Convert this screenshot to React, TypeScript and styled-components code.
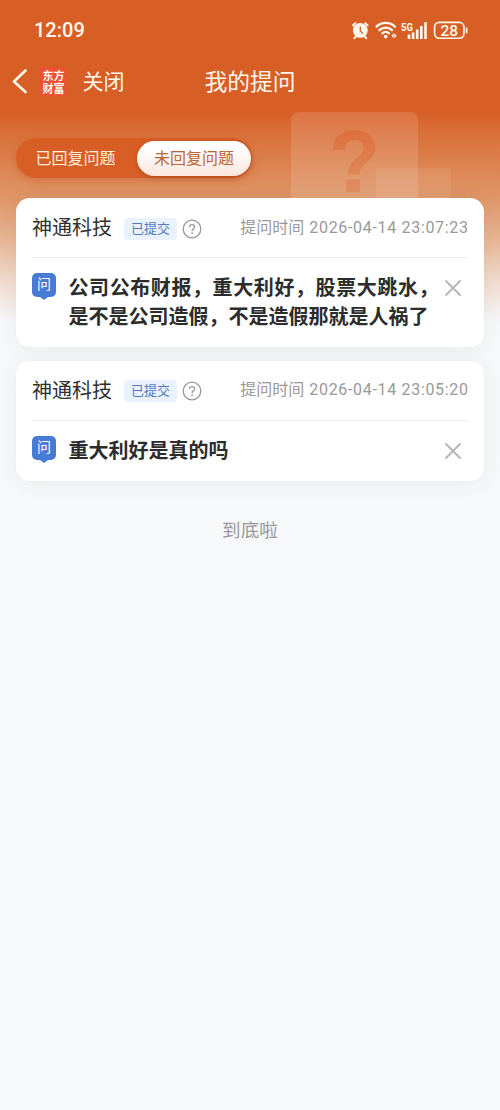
import React from "react";
import styled, { createGlobalStyle } from "styled-components";

const GlobalStyle = createGlobalStyle`
  * { box-sizing: border-box; }
  body {
    margin: 0;
    background: #f7f8fa;
    font-family: Roboto, "Noto Sans CJK SC", sans-serif;
    -webkit-font-smoothing: antialiased;
  }
`;

const Page = styled.div`
  position: relative;
  width: 500px;
  min-height: 1110px;
  overflow: hidden;
  background: linear-gradient(
      180deg,
      #d75f26 0,
      #d75f26 110px,
      #da743e 140px,
      #df9667 198px,
      #e7b696 240px,
      #f1dbce 280px,
      #f7f8fa 322px
    )
    #f7f8fa;
`;

const StatusBar = styled.div`
  display: flex;
  align-items: center;
  justify-content: space-between;
  height: 60px;
  padding: 0 32px 0 34px;
  color: #fff8ec;
`;

const Clock = styled.span`
  font-size: 20px;
  font-weight: 500;
  line-height: 24px;
`;

const StatusIcons = styled.svg`
  display: block;
  width: 118px;
  height: 24px;
`;

const NavBar = styled.div`
  position: relative;
  display: flex;
  align-items: center;
  height: 44px;
  padding-left: 12px;
  color: #fff8ec;
`;

const BackIcon = styled.svg`
  width: 16px;
  height: 26px;
`;

const Brand = styled.div`
  width: 27px;
  height: 29px;
  margin: -2px 15.5px 0 12px;
  padding-top: 2px;
  border-radius: 4px;
  background: #ea5130;
  font-family: "Noto Sans CJK SC", sans-serif;
  font-size: 11px;
  font-weight: 700;
  line-height: 13px;
  text-align: center;
`;

const NavText = styled.span`
  font-size: 21px;
  line-height: 30px;
`;

const NavTitle = styled.h1`
  position: absolute;
  top: 8px;
  left: 0;
  right: 0;
  margin: 0;
  text-align: center;
  font-size: 22.8px;
  font-weight: 400;
  line-height: 30px;
  pointer-events: none;
`;

const Backdrop = styled.svg`
  position: absolute;
  left: 280px;
  top: 104px;
  width: 190px;
  height: 110px;
`;

const Tabs = styled.div`
  position: relative;
  display: flex;
  width: 236px;
  height: 40px;
  margin: 34px 0 0 16px;
  padding: 3px 1px 2px 0;
  border-radius: 20px;
  background: #d75f26;
  box-shadow: 0 2px 8px rgba(196, 78, 24, 0.4);
`;

const Tab = styled.button<{ $active?: boolean }>`
  flex: ${(p) => (p.$active ? "0 0 114px" : "1")};
  padding: ${(p) => (p.$active ? "0" : "0 2px 0 0")};
  border: 0;
  border-radius: 18px;
  background: ${(p) => (p.$active ? "linear-gradient(180deg, #ffffff 20%, #fbe6dd 100%)" : "transparent")};
  box-shadow: ${(p) => (p.$active ? "0 1px 4px rgba(130, 45, 5, 0.5)" : "none")};
  color: ${(p) => (p.$active ? "#bd6437" : "#fff0dc")};
  font-family: inherit;
  font-size: 16px;
  line-height: 34px;
`;

const List = styled.main`
  position: relative;
  display: flex;
  flex-direction: column;
  gap: 13.6px;
  padding: 20px 16px 0;
`;

const Card = styled.article`
  padding: 0 16px;
  border-radius: 14px;
  background: #fff;
  box-shadow: 0 2px 20px rgba(60, 50, 40, 0.07);
`;

const CardHead = styled.header`
  display: flex;
  align-items: center;
  height: 60px;
  border-bottom: 1px solid #ebebeb;
`;

const Company = styled.span`
  margin-top: 1px;
  color: #303030;
  font-size: 20px;
  line-height: 30px;
`;

const Status = styled.span`
  width: 53px;
  height: 22px;
  margin: 2px 5px 0 12px;
  border-radius: 4px;
  background: #eaf2fe;
  color: #5279bd;
  font-size: 13px;
  line-height: 22px;
  text-align: center;
`;

const HelpIcon = styled.svg`
  width: 20px;
  height: 20px;
  margin-top: 2px;
`;

const Time = styled.span`
  margin-left: auto;
  color: #999;
  font-size: 16px;
  line-height: 24px;
  white-space: nowrap;
`;

const Stamp = styled.time`
  margin-left: 5px;
  letter-spacing: 0.68px;
  margin-right: -0.7px;
`;

const CardBody = styled.div`
  display: flex;
  align-items: flex-start;
  padding: 14px 6px 17.4px 0;
`;

const AskBadge = styled.span`
  position: relative;
  flex: none;
  width: 24px;
  height: 24px;
  margin: 1px 12.5px 0 0;
  border-radius: 5px;
  background: #477bd6;
  color: #fff;
  font-size: 14px;
  line-height: 23px;
  text-align: center;

  &::after {
    content: "";
    position: absolute;
    left: 8px;
    top: 24px;
    border: 4px solid transparent;
    border-top: 3px solid #477bd6;
    border-bottom: 0;
  }
`;

const Question = styled.p`
  flex: none;
  width: 370px;
  margin: 0;
  color: #2c2c2c;
  font-family: "Noto Sans CJK SC", sans-serif;
  font-size: 20px;
  font-weight: 700;
  line-height: 29px;
  text-align: justify;
  text-spacing-trim: space-all;
`;

const CloseIcon = styled.svg`
  flex: none;
  width: 18px;
  height: 18px;
  margin: 7px 0 0 5.5px;
`;

const Footer = styled.div`
  margin-top: 35.6px;
  color: #999;
  font-size: 18.6px;
  line-height: 28px;
  text-align: center;
`;

const SystemStatus = () => (
  <StatusIcons viewBox="350 18 118 24" fill="none" stroke="#fff8ec">
    <circle cx="360.3" cy="30.4" r="7.4" fill="#fff8ec" stroke="none" />
    <path d="M352.9 25.4l2.4-2.2M367.7 25.4l-2.4-2.2M355.4 37l-1 1.2M365.2 37l1 1.2" strokeWidth="2" strokeLinecap="round" />
    <path d="M360.3 26.6v4.4l2.6 2.4" stroke="#d75f26" strokeWidth="1.3" />
    <path d="M376.5 26.6a13 13 0 0 1 18.4 0M379.4 30.1a9 9 0 0 1 12.6 0M382.4 33.3a4.8 4.8 0 0 1 6.6 0" strokeWidth="2.3" strokeLinecap="round" />
    <circle cx="385.7" cy="36.6" r="1.8" fill="#fff8ec" stroke="none" />
    <path d="M391.4 35.8l2.2-2.8v5.2zM396.6 35.8l-2.2-2.6v5.2z" fill="#fff8ec" stroke="none" />
    <text x="401" y="30.5" fill="#fff8ec" stroke="none" fontSize="10" fontWeight="700" fontFamily="Roboto, sans-serif" textLength="12" lengthAdjust="spacingAndGlyphs">5G</text>
    <path d="M409 34.5V39M413.1 32.5V39M417.2 29.5V39M421.3 26V39M425.5 22.2V39" strokeWidth="2.6" />
    <rect x="434.6" y="22.4" width="29.4" height="15.8" rx="4.6" strokeWidth="1.6" />
    <path d="M466.6 28.4v4" strokeWidth="1.8" strokeLinecap="round" />
    <text x="449.2" y="35.9" textAnchor="middle" fill="#fff8ec" stroke="none" fontSize="15.5" fontWeight="500" fontFamily="Roboto, sans-serif">28</text>
  </StatusIcons>
);

const questions = [
  { company: "神通科技", time: "2026-04-14 23:07:23", text: "公司公布财报，重大利好，股票大跳水，是不是公司造假，不是造假那就是人祸了" },
  { company: "神通科技", time: "2026-04-14 23:05:20", text: "重大利好是真的吗" },
];

const QuestionCard = ({ company, time, text }: (typeof questions)[number]) => (
  <Card>
    <CardHead>
      <Company>{company}</Company>
      <Status>已提交</Status>
      <HelpIcon viewBox="0 0 20 20" fill="none" stroke="#999" strokeWidth="1.3">
        <circle cx="10" cy="10" r="8.8" />
        <path d="M7.4 8.2C7.4 6.6 8.5 5.6 10 5.6s2.6 1 2.6 2.3c0 1.8-2.5 2-2.5 4.1" />
        <circle cx="10.1" cy="14.2" r="0.9" fill="#999" stroke="none" />
      </HelpIcon>
      <Time>
        提问时间<Stamp>{time}</Stamp>
      </Time>
    </CardHead>
    <CardBody>
      <AskBadge>问</AskBadge>
      <Question>{text}</Question>
      <CloseIcon viewBox="0 0 18 18" stroke="#b5b5b5" strokeWidth="1.8" strokeLinecap="round">
        <path d="M2 2l14 14M16 2L2 16" />
      </CloseIcon>
    </CardBody>
  </Card>
);

export default function App() {
  return (
    <>
      <GlobalStyle />
      <Page>
        <Backdrop viewBox="280 104 190 110">
          <defs>
            <linearGradient id="tile" x1="0" y1="0" x2="0" y2="1">
              <stop offset="0" stopColor="#fff" stopOpacity="0.12" />
              <stop offset="1" stopColor="#fff" stopOpacity="0.13" />
            </linearGradient>
            <linearGradient id="mark" gradientUnits="userSpaceOnUse" x1="0" y1="130" x2="0" y2="192">
              <stop offset="0" stopColor="#dd6a34" stopOpacity="0.75" />
              <stop offset="1" stopColor="#dd8656" stopOpacity="0.65" />
            </linearGradient>
          </defs>
          <rect x="291" y="112" width="127" height="100" rx="8" fill="url(#tile)" />
          <path
            d="M333 150C333 137 342 130 354.5 130C367 130 375.5 137 375.5 148C375.5 161 360 162 360 174.5H348C348 158 363.5 158 363.5 148C363.5 143 360 140 354.5 140C348.5 140 345 143.5 345 150Z M346 179.5H360V192H346Z"
            fill="url(#mark)"
          />
          <rect x="376" y="168" width="75" height="45" rx="2" fill="#fff" fillOpacity="0.08" />
        </Backdrop>
        <StatusBar>
          <Clock>12:09</Clock>
          <SystemStatus />
        </StatusBar>
        <NavBar>
          <BackIcon viewBox="0 0 16 26" fill="none" stroke="#fff8ec" strokeWidth="2.6" strokeLinecap="round" strokeLinejoin="round">
            <path d="M13.5 1.5L2 12.5l11.5 10.5" />
          </BackIcon>
          <Brand>
            东方
            <br />
            财富
          </Brand>
          <NavText>关闭</NavText>
          <NavTitle>我的提问</NavTitle>
        </NavBar>
        <Tabs>
          <Tab>已回复问题</Tab>
          <Tab $active>未回复问题</Tab>
        </Tabs>
        <List>
          {questions.map((q) => (
            <QuestionCard key={q.time} {...q} />
          ))}
        </List>
        <Footer>到底啦</Footer>
      </Page>
    </>
  );
}
